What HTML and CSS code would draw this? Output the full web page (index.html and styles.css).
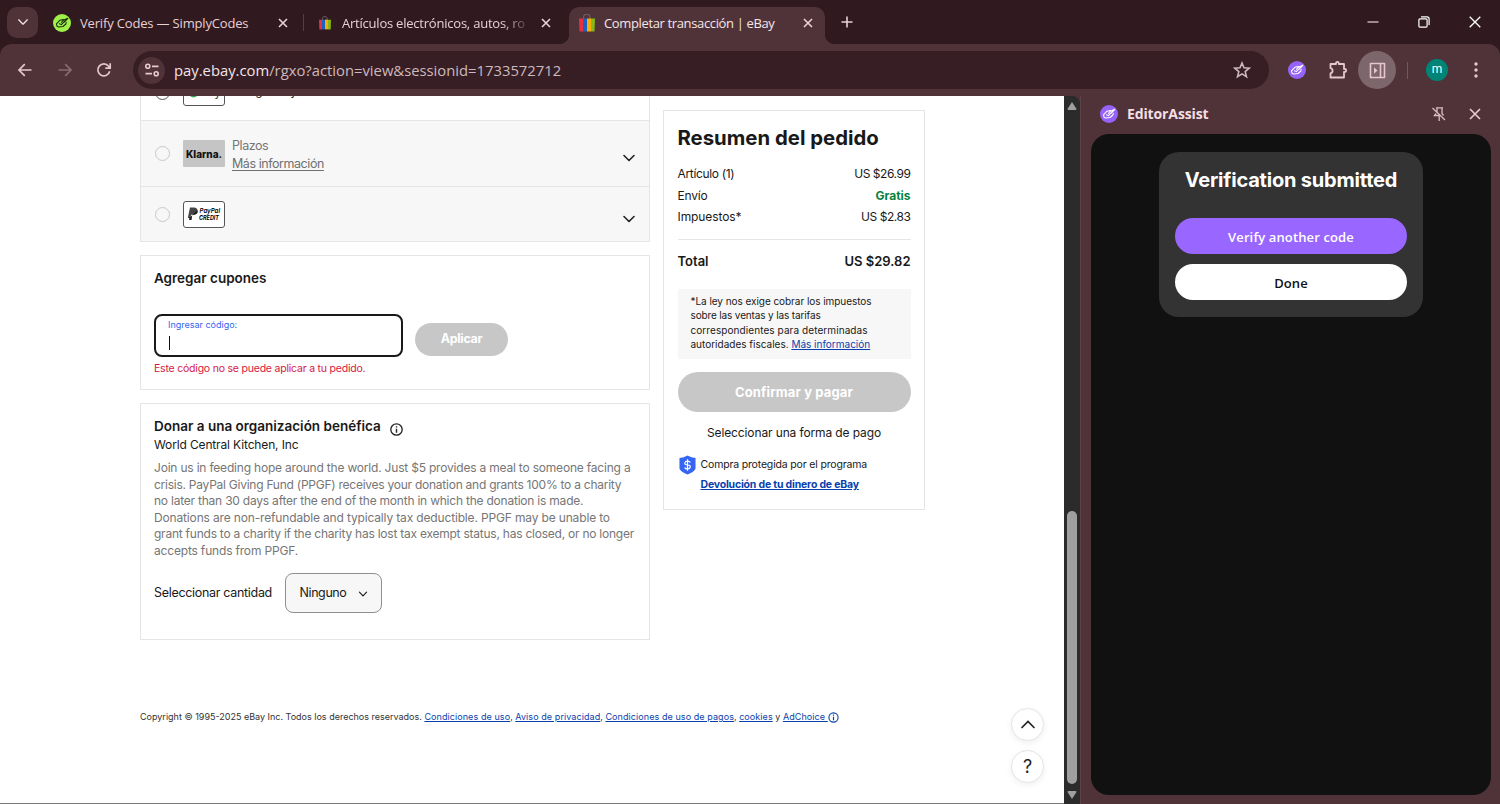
FILE: index.html
```html
<!DOCTYPE html>
<html lang="es">
<head>
<meta charset="utf-8">
<title>Completar transacción | eBay</title>
<link rel="stylesheet" href="styles.css">
</head>
<body>
<svg class="defs" width="0" height="0">
  <symbol id="x" viewBox="0 0 12 12"><path d="M2 2l8 8M10 2l-8 8" fill="none" stroke="currentColor" stroke-width="1.6"/></symbol>
  <symbol id="chev" viewBox="0 0 14 14"><path d="M2 4.5l5 5 5-5" fill="none" stroke="currentColor" stroke-width="1.6" stroke-linecap="round" stroke-linejoin="round"/></symbol>
  <symbol id="bag" viewBox="0 0 16 18"><path d="M4.5 5V3.500a3 3 0 0 1 6.500 0V5" fill="none" stroke="#6d6067" stroke-width="1.200"/><path d="M0 4.500h4V17.500H.5z" fill="#e5323e"/><path d="M4 4.500h4v13H4z" fill="#1c62c4"/><path d="M8 4.500h4v13H8z" fill="#f5af02"/><path d="M12 4.500h4l-.5 13H12z" fill="#86b817"/></symbol>
  <symbol id="tag" viewBox="0 0 18 18"><path d="M10.500 5.500L6.800 6.300 3.500 9.800l.5 2.400 1.800.900 4.200-.600 2.900-2.500.3-1.700M6.500 9.700l1.900.9 2.100-2.300 4.300-4-4.800 2.200-1.500 1.800M11 8.300l3.800-4" fill="none" stroke="currentColor" stroke-width="1.050" stroke-linejoin="round" stroke-linecap="round"/></symbol>
</svg>
<header class="tabs">
  <button class="tab-search"><svg width="12" height="12"><use href="#chev"/></svg></button>
  <div class="tab tab-one"><span class="fav green"><svg width="18" height="18"><use href="#tag"/></svg></span><span class="title-codes">Verify Codes — SimplyCodes</span><svg class="close" width="12" height="12"><use href="#x"/></svg></div>
  <i class="sep"></i>
  <div class="tab tab-two"><svg class="bag-s" width="12" height="14"><use href="#bag"/></svg><span class="fade">Artículos electrónicos, autos, ro</span><svg class="close" width="12" height="12"><use href="#x"/></svg></div>
  <div class="tab tab-active"><svg width="16" height="18"><use href="#bag"/></svg><span>Completar transacción | eBay</span><svg class="close" width="12" height="12"><use href="#x"/></svg></div>
  <svg class="plus" width="14" height="14" viewBox="0 0 14 14"><path d="M7 1.5v11M1.5 7h11" stroke="currentColor" stroke-width="1.6"/></svg>
  <div class="win">
    <svg width="12" height="12" viewBox="0 0 12 12"><path d="M.5 6h11" stroke="#d3b9bf" stroke-width="1.4"/></svg>
    <svg width="12" height="12" viewBox="0 0 12 12"><path d="M.9 4q0-1.1 1.1-1.1h6q1.1 0 1.1 1.1v6q0 1.1-1.1 1.1H2Q.9 11.1.9 10zM3 .9h6q2.1 0 2.1 2.1v6" fill="none" stroke="currentColor" stroke-width="1.2"/></svg>
    <svg width="12" height="12" viewBox="0 0 12 12"><path d="M.7.7l10.6 10.6M11.3.7L.7 11.3" stroke="currentColor" stroke-width="1.3"/></svg>
  </div>
</header>
<div class="toolbar">
  <svg class="nav" width="16" height="16" viewBox="0 0 16 16"><path d="M14.5 8H2.2M7.8 2.2L2 8l5.8 5.8" fill="none" stroke="currentColor" stroke-width="1.7"/></svg>
  <svg class="nav dim" width="16" height="16" viewBox="0 0 16 16"><path d="M1.5 8h12.3M8.2 2.2L14 8l-5.8 5.8" fill="none" stroke="currentColor" stroke-width="1.7"/></svg>
  <svg class="nav reload" width="16" height="16" viewBox="0 0 16 16"><path d="M13.7 9.3A6 6 0 1 1 12.6 4.2L14 5.8M14.2 1.3v4.9H9.3" fill="none" stroke="currentColor" stroke-width="1.7"/></svg>
  <div class="omni">
    <span class="tune"><svg width="16" height="14" viewBox="0 0 16 14"><path d="M8 3.3h6.5M1.5 10.7H8" stroke="currentColor" stroke-width="1.7"/><circle cx="3.8" cy="3.3" r="2" fill="none" stroke="currentColor" stroke-width="1.6"/><circle cx="12.2" cy="10.7" r="2" fill="none" stroke="currentColor" stroke-width="1.6"/></svg></span>
    <span><b>pay.ebay.com</b>/rgxo?action=view&amp;sessionid=1733572712</span>
    <svg class="star" width="18" height="18" viewBox="0 0 18 18"><path d="M9 2l2 4.8 5.2.4-4 3.4 1.3 5.1L9 12.9l-4.5 2.8 1.3-5.1-4-3.4L7 6.8z" fill="none" stroke="currentColor" stroke-width="1.6"/></svg>
  </div>
  <span class="fav purple"><svg width="18" height="18"><use href="#tag"/></svg></span>
  <svg class="ext" width="20" height="20" viewBox="0 0 20 20"><path d="M2.500 4H8V3.200a1.400 1.400 0 0 1 2.800 0V4H16v5h.7a1.500 1.500 0 0 1 0 3H16v5.500H2.500v-4.200a2.600 2.600 0 0 0 0-5.100z" fill="none" stroke="currentColor" stroke-width="1.8" stroke-linejoin="round"/></svg>
  <span class="panel-btn"><svg width="17" height="17" viewBox="0 0 17 17"><path d="M1.500 1.500h14v14h-14zM11.500 1.500v14" fill="none" stroke="currentColor" stroke-width="1.600" stroke-linejoin="round"/><path d="M5 5.200l3.500 3.300L5 11.800z" fill="currentColor"/></svg></span>
  <i class="sep pale"></i>
  <span class="avatar">m</span>
  <svg class="dots" width="4" height="16" viewBox="0 0 4 16"><circle cx="2" cy="2" r="1.7"/><circle cx="2" cy="8" r="1.7"/><circle cx="2" cy="14" r="1.7"/></svg>
</div>
<div class="content">
  <main class="page">
    <div class="columns">
      <section class="left">
        <div class="methods">
          <div class="row gpay"><i class="radio dark"></i><span class="logo"><svg width="40" height="26" viewBox="0 0 40 26"><circle cx="9.5" cy="12.500" r="4" fill="none" stroke="#2da94f" stroke-width="2"/><path d="M9 8.500a4 4 0 0 1 4 4" stroke="#4285f4" stroke-width="2" fill="none"/><text x="16" y="16" font-family="Inter" font-size="12" fill="#444">Pay</text></svg></span><span>Google Pay</span></div>
          <div class="row klarna"><i class="radio"></i><span class="logo k">Klarna.</span><div class="plazos">Plazos<br><u>Más información</u></div><svg class="chev" width="14" height="14"><use href="#chev"/></svg></div>
          <div class="row paypal"><i class="radio"></i><span class="logo"><svg width="38" height="22" viewBox="0 0 38 22"><path d="M5 4.500h4.500q3.500.5 2.800 4-1 3.200-4.500 3.200H6L5.500 15H2.800z" fill="#444"/><path d="M12.600 7q1 4-3.500 4.800l-1.800.3L6.500 17H4l.4-2" fill="#1b1b1b"/><text x="14.500" y="10" font-size="6.500" font-weight="600" font-style="italic" textLength="20.500" lengthAdjust="spacingAndGlyphs">PayPal</text><text x="14" y="16.500" font-size="6.500" font-weight="700" font-style="italic" textLength="20" lengthAdjust="spacingAndGlyphs">CREDIT</text></svg></span><svg class="chev" width="14" height="14"><use href="#chev"/></svg></div>
        </div>
        <div class="card coupons">
          <h2 class="line">Agregar cupones</h2>
          <div class="form"><div class="input"><label>Ingresar código:</label><i class="caret"></i></div><button class="apply">Aplicar</button></div>
          <p class="error">Este código no se puede aplicar a tu pedido.</p>
        </div>
        <div class="card donate">
          <h2 class="line">Donar a una organización benéfica<svg width="13" height="13" viewBox="0 0 13 13"><circle cx="6.500" cy="6.500" r="5.700" fill="none" stroke="#222" stroke-width="1.300"/><path d="M6.500 5.700v4M6.500 3.200v1.400" stroke="#222" stroke-width="1.400"/></svg></h2>
          <p class="org">World Central Kitchen, Inc</p>
          <p class="desc"><span class="d1">Join us in feeding hope around the world. Just $5 provides a meal to someone facing a</span><br><span class="d2">crisis. PayPal Giving Fund (PPGF) receives your donation and grants 100% to a charity</span><br><span class="d3">no later than 30 days after the end of the month in which the donation is made.</span><br><span class="d4">Donations are non-refundable and typically tax deductible. PPGF may be unable to</span><br><span class="d5">grant funds to a charity if the charity has lost tax exempt status, has closed, or no longer</span><br><span class="d6">accepts funds from PPGF.</span></p>
          <div class="amount"><span>Seleccionar cantidad</span><button class="select">Ninguno<svg width="10" height="10"><use href="#chev"/></svg></button></div>
        </div>
      </section>
      <aside class="card summary">
        <h1>Resumen del pedido</h1>
        <div class="item"><span>Artículo (1)</span><span class="price">US $26.99</span></div>
        <div class="item"><span class="ship">Envío</span><b class="free">Gratis</b></div>
        <div class="item"><span class="tax">Impuestos*</span><span class="price">US $2.83</span></div>
        <div class="item total"><span>Total</span><span>US $29.82</span></div>
        <p class="note"><span class="n1">*La ley nos exige cobrar los impuestos</span><br><span class="n2">sobre las ventas y las tarifas</span><br><span class="n3">correspondientes para determinadas</span><br><span>autoridades fiscales. <a>Más información</a></span></p>
        <button class="pay">Confirmar y pagar</button>
        <p class="choose">Seleccionar una forma de pago</p>
        <div class="protect"><svg width="17" height="20" viewBox="0 0 18 20"><path d="M9 0q4 2.500 8.500 2.500V14q-2 4-8.500 6Q2.500 18 .5 14V2.500Q5 2.500 9 0z" fill="#3665f3"/><path d="M12 7.300Q11.300 5.800 9 5.800T6.200 7.800 9 10t2.900 2.200T9 14.200 6 12.600M9 4v12" fill="none" stroke="#fff" stroke-width="1.300"/></svg><p><span>Compra protegida por el programa</span><br><a>Devolución de tu dinero de eBay</a></p></div>
      </aside>
    </div>
    <footer><span>Copyright © 1995-2025 eBay Inc. Todos los derechos reservados. </span><a>Condiciones de uso</a><span>, </span><a>Aviso de privacidad</a><span>, </span><a>Condiciones de uso de pagos</a><span>, </span><a>cookies</a><span> y </span><a>AdChoice </a><svg width="11" height="11" viewBox="0 0 11 11"><circle cx="5.500" cy="5.500" r="4.600" fill="none" stroke="#0a3fae" stroke-width="1.100"/><path d="M5.500 4.700v3.600M5.500 2.500v1.300" stroke="#0a3fae" stroke-width="1.200"/></svg></footer>
    <div class="floaters"><button><svg width="16" height="16" viewBox="0 0 16 16"><path d="M2 10.500l6-6 6 6" fill="none" stroke="#222" stroke-width="1.700" stroke-linecap="round"/></svg></button><button>?</button></div>
  </main>
  <div class="scroll"><svg width="10" height="8" viewBox="0 0 10 8"><path d="M5 0l4.500 7q0 1-1 1h-7q-1 0-1-1z" fill="#9f9f9f"/></svg><i class="thumb"></i><svg width="10" height="8" viewBox="0 0 10 8"><path d="M5 8L.5 1q0-1 1-1h7q1 0 1 1z" fill="#9f9f9f"/></svg></div>
  <aside class="panel">
    <div class="panel-head"><span class="fav purple"><svg width="18" height="18"><use href="#tag"/></svg></span><b>EditorAssist</b><svg class="pin" width="16" height="16" viewBox="0 0 16 16"><path d="M1.500 2l12.500 12M5 1.800h7M6 2v4M11 2v5.500l1.500 2M5 7.500L3.500 9.500h5M8.200 9.500V15" fill="none" stroke="currentColor" stroke-width="1.300"/></svg><svg class="px" width="14" height="14" viewBox="0 0 14 14"><path d="M2 2l10 10M12 2L2 12" stroke="currentColor" stroke-width="1.600"/></svg></div>
    <div class="panel-body"><div class="dialog"><h3>Verification submitted</h3><button class="verify">Verify another code</button><button class="done">Done</button></div></div>
  </aside>
</div>
</body>
</html>
```
FILE: styles.css
```css
* { box-sizing: border-box; }
body { margin: 0; width: 1500px; height: 804px; overflow: hidden; display: flex; flex-direction: column; background: #311a1f; font-family: Inter, "Liberation Sans", sans-serif; color: #191919; }
h1, h2, h3, p { margin: 0; }
button { border: 0; padding: 0; font: inherit; letter-spacing: inherit; display: flex; align-items: center; justify-content: center; }
svg { flex: none; display: block; }
span, a, b, u { white-space: nowrap; }
.defs { position: absolute; }

.tabs { height: 44px; flex: none; display: flex; align-items: center; color: #e8cfd4; font: 13px "Open Sans", sans-serif; letter-spacing: -.36px; }
.tab-search { width: 31px; height: 31px; margin-left: 7px; border-radius: 10px; background: #503339; color: #f0dfe2; }
.tab { display: flex; align-items: center; height: 46px; padding-top: 2px; }
.tab .close { margin-left: auto; color: #ead3d8; }
.fav { width: 18px; height: 18px; border-radius: 50%; flex: none; }
.green { background: #a0f04c; color: #172a0c; }
.purple { background: #9563fa; color: #fff; }
.tab-one { width: 236px; margin-left: 15px; gap: 9px; }
.title-codes { letter-spacing: -.17px; }
.sep { width: 1px; height: 17px; background: #5a3c43; margin-left: 14px; }
.tab-two { width: 233px; margin-left: 15px; gap: 11px; }
.fade { width: 184px; letter-spacing: -.22px; -webkit-mask: linear-gradient(90deg, #000 160px, transparent 190px); mask: linear-gradient(90deg, #000 160px, transparent 190px); }
.tab-active { position: relative; width: 256px; height: 37px; margin: 7px 0 0 17px; padding: 0 11px 5px 10px; gap: 9px; border-radius: 10px 10px 0 0; background: #503339; color: #f6e5e8; }
.tab-active::before, .tab-active::after { content: ""; position: absolute; bottom: 0; width: 10px; height: 10px; }
.tab-active::before { left: -10px; background: radial-gradient(circle at 0 0, transparent 10px, #503339 10.5px); }
.tab-active::after { right: -10px; background: radial-gradient(circle at 100% 0, transparent 10px, #503339 10.5px); }
.plus { margin-left: 15px; }
.win { display: flex; gap: 39px; margin-left: auto; padding-right: 19px; color: #fff; }

.toolbar { height: 52px; flex: none; display: flex; align-items: center; background: #503339; border-radius: 12px 12px 0 0; color: #e5c7cd; }
.nav { margin-left: 24px; }
.nav:first-child { margin-left: 17px; }
.nav.reload { margin-left: 23px; }
.dim { color: #896a71; }
.omni { width: 1136px; height: 38px; margin-left: 21px; padding: 0 18px 0 5px; border-radius: 19px; background: #371e24; display: flex; align-items: center; font: 14.8px "Open Sans", sans-serif; color: #cdb9bd; }
.omni b { font-weight: 400; color: #f4e3e6; }
.tune { width: 27px; height: 27px; border-radius: 50%; background: #503339; display: flex; align-items: center; justify-content: center; color: #e6cbd1; margin-right: 9px; }
.star { margin-left: auto; }
.toolbar > .purple { margin-left: 19px; }
.ext { margin-left: 22px; }
.panel-btn { width: 38px; height: 38px; margin-left: 10px; border-radius: 50%; background: #7d666c; display: flex; align-items: center; justify-content: center; }
.pale { margin-left: 11px; background: #76565d; }
.avatar { width: 22px; height: 22px; margin-left: 18px; border-radius: 50%; background: #008476; color: #fff; font: 12px/21px Roboto, sans-serif; text-align: center; }
.dots { margin-left: 26px; fill: #e5c7cd; }

.content { flex: 1; display: flex; min-height: 0; background: #503339; }
.page { width: 1064px; position: relative; background: #fff; border-bottom: 1px solid #777; overflow: hidden; padding-left: 140px; }
.columns { display: flex; gap: 13px; align-items: flex-start; height: 615px; }
.left { width: 510px; display: flex; flex-direction: column; gap: 13px; }
.methods { height: 146px; border: 1px solid #e5e5e5; border-top: 0; }
.row { display: flex; align-items: center; padding: 0 13px 0 14px; color: #767676; font-size: 12px; }
.row .chev { margin-left: auto; color: #222; }
.radio { width: 15px; height: 15px; border: 1px solid #c9c9c9; border-radius: 50%; margin-right: 13px; }
.radio.dark { border-color: #555; }
.logo { width: 42px; height: 27px; border: 1.5px solid #555; border-radius: 3px; background: #fff; display: flex; align-items: center; justify-content: center; }
.logo.k { border: 0; border-radius: 1px; background: #c5c5c5; color: #111; font-weight: 800; font-size: 10px; }
.gpay { height: 24px; align-items: flex-end; overflow: hidden; padding-bottom: 14px; color: #222; }
.gpay .radio { margin-bottom: 6px; }
.gpay > span:last-child { margin: 0 0 8px 7px; }
.klarna { height: 66px; border-top: 1px solid #e5e5e5; background: #f7f7f7; }
.klarna .chev { margin-top: 9px; }
.paypal { height: 55px; border-top: 1px solid #e5e5e5; background: #f7f7f7; }
.paypal .chev { margin-top: 9px; }
.plazos { margin-left: 7px; padding-top: 3px; line-height: 18.5px; font-size: 12.5px; letter-spacing: -.44px; }
.plazos u { color: #707070; text-underline-offset: 2px; }
.card { border: 1px solid #e5e5e5; padding: 0 13px; }
.coupons { height: 135px; }
.line { font-size: 13.5px; font-weight: 600; line-height: 16px; display: flex; gap: 9px; align-items: center; }
.coupons .line { margin-top: 14px; }
.form { display: flex; align-items: center; gap: 12px; margin-top: 28px; }
.input { width: 249px; height: 43px; border: 2px solid #191919; border-radius: 8px; padding: 3px 0 0 12px; }
.input label { display: block; width: max-content; font-size: 9px; line-height: 11px; color: #3665f3; }
.caret { display: block; width: 1px; height: 14px; margin: 6px 0 0 1px; background: #111; }
.apply { width: 93px; height: 33px; margin-top: 7px; padding-bottom: 2px; border-radius: 17px; background: #c7c7c7; color: #fff; font-size: 12.5px; font-weight: 700; letter-spacing: -.33px; }
.error { margin-top: 4px; font-size: 10.5px; line-height: 15px; letter-spacing: -.21px; color: #d5173f; }
.donate { height: 237px; }
.donate .line { margin-top: 14px; }
.donate .line svg { margin: 4px 0 -2px; }
.org { font-size: 12px; line-height: 15px; margin-top: 3px; letter-spacing: -.14px; }
.desc { margin-top: 8px; font-size: 12px; line-height: 16.6px; color: #767676; }
.d1 { letter-spacing: -.198px; }
.d2 { letter-spacing: -.25px; }
.d3 { letter-spacing: -.22px; }
.d4 { letter-spacing: -.155px; }
.d5 { letter-spacing: -.235px; }
.d6 { letter-spacing: -.18px; }
.amount { display: flex; align-items: center; gap: 13px; margin-top: 13px; font-size: 12.5px; letter-spacing: -.31px; }
.select { width: 97px; height: 40px; padding: 0 0 1px 1px; border: 1px solid #8f8f8f; border-radius: 8px; background: #f7f7f7; gap: 12px; letter-spacing: -.4px; color: #191919; }
.select svg { margin-top: 3px; }
.summary { width: 262px; height: 400px; margin-top: 14px; padding: 0 13.5px; }
h1 { font-size: 20.35px; line-height: 28px; margin: 13px 0 11px; }
.item { display: flex; justify-content: space-between; font-size: 12px; line-height: 21.5px; letter-spacing: -.33px; }
.ship { letter-spacing: -.2px; }
.tax { letter-spacing: -.09px; }
.price { letter-spacing: -.44px; }
.free { color: #05823f; letter-spacing: 0; }
.total { margin-top: 11px; border-top: 1px solid #e5e5e5; font-size: 13px; font-weight: 600; padding-top: 11px; letter-spacing: 0; }
.note { margin-top: 17px; height: 70px; padding: 5px 13px; background: #f7f7f7; font-size: 10px; line-height: 14.4px; }
.n1 { letter-spacing: -.05px; }
.n2 { letter-spacing: -.14px; }
.n3 { letter-spacing: .08px; }
a { color: #0a3fae; text-decoration: underline; }
.pay { width: 233px; height: 40px; margin-top: 13px; border-radius: 20px; background: #c7c7c7; color: #fff; font-size: 13px; font-weight: 700; letter-spacing: .15px; }
.choose { text-align: center; font-size: 12px; line-height: 20px; margin-top: 11px; letter-spacing: -.12px; }
.protect { display: flex; gap: 4.5px; margin: 12px 0 0 1.5px; font-size: 10.5px; line-height: 20px; letter-spacing: -.165px; }
.protect a { font-weight: 700; letter-spacing: -.19px; }
footer { display: flex; align-items: center; font-size: 9px; line-height: 12px; color: #333; }
footer span, footer a { white-space: pre; }
footer a { letter-spacing: .08px; }
.floaters { position: absolute; left: 1011px; top: 612px; display: flex; flex-direction: column; gap: 9px; }
.floaters button { width: 33px; height: 33px; border: 1px solid #e5e5e5; border-radius: 50%; background: #fff; box-shadow: 0 2px 6px #0001; font-size: 18px; color: #222; }
.scroll { width: 16px; background: #2b2b2b; border-radius: 0 8px 0 0; display: flex; flex-direction: column; align-items: center; padding: 6px 0 4px; }
.thumb { width: 10px; height: 273px; border-radius: 5px; background: #9f9f9f; margin: 401px 0 7px; }
.panel { width: 420px; padding: 0 9px 9px 10px; display: flex; flex-direction: column; border-left: 1px solid #5d4248; }
.panel-head { height: 38px; display: flex; align-items: center; padding: 0 9px 3px; color: #f3dfe3; font: 14px "Open Sans", sans-serif; }
.panel-head b { font-weight: 700; margin-left: 9px; letter-spacing: -.12px; }
.pin { margin-left: auto; color: #d9bcc2; }
.px { margin-left: 21px; color: #e5cdd2; }
.panel-body { flex: 1; border-radius: 18px; background: #111; padding-top: 18px; }
.dialog { width: 264px; height: 165px; margin: 0 auto; border-radius: 20px; background: #333; padding: 14px 16px; }
h3 { color: #fff; font-size: 20px; line-height: 28px; text-align: center; margin-bottom: 24px; letter-spacing: -.2px; }
.verify, .done { width: 232px; height: 36px; padding-top: 1px; border-radius: 18px; font: 600 13px "Open Sans", sans-serif; letter-spacing: .13px; background: #96f; color: #fff; }
.done { margin-top: 10px; background: #fff; color: #111; }
```
